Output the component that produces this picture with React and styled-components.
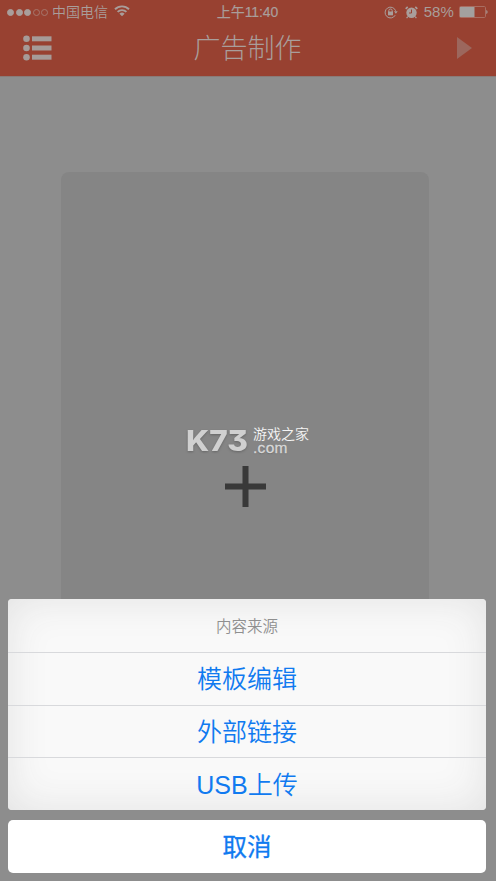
import styled, { createGlobalStyle } from "styled-components";

const options = ["模板编辑", "外部链接", "USB上传"];

export default function App() {
    return (
        <Screen>
            <GlobalStyle />
            <Header>
                <StatusBar>
                    <Carrier>
                        <Signal>
                            <Dot $on />
                            <Dot $on />
                            <Dot $on />
                            <Dot />
                            <Dot />
                        </Signal>
                        <span>中国电信</span>
                        <WifiIcon />
                    </Carrier>
                    <Time>上午11:40</Time>
                    <Indicators>
                        <LockIcon />
                        <AlarmIcon />
                        <Percent>58%</Percent>
                        <BatteryIcon />
                    </Indicators>
                </StatusBar>
                <NavBar>
                    <MenuIcon />
                    <Title>广告制作</Title>
                    <PlayIcon />
                </NavBar>
            </Header>

            <Content>
                <AdCard>
                    <PlusIcon />
                    <Watermark>
                        <WatermarkLogo />
                        <WatermarkText>
                            <WatermarkName>游戏之家</WatermarkName>
                            <WatermarkDomain>.com</WatermarkDomain>
                        </WatermarkText>
                    </Watermark>
                </AdCard>
            </Content>

            <ActionSheet>
                <Options>
                    <SheetLabel>内容来源</SheetLabel>
                    {options.map((option) => (
                        <Option key={option}>{option}</Option>
                    ))}
                </Options>
                <Cancel>取消</Cancel>
            </ActionSheet>
        </Screen>
    );
}

function WifiIcon() {
    return (
        <svg width="16" height="12" viewBox="0 0 16 12" fill="none" stroke="#a99e9b" strokeWidth="1.9">
            <path d="M1 4.2a10 10 0 0 1 14 0" />
            <path d="M3.6 6.9a6.3 6.3 0 0 1 8.8 0" />
            <path d="M8 11.2 5.4 8.8a3.8 3.8 0 0 1 5.2 0z" fill="#a99e9b" stroke="none" />
        </svg>
    );
}

function LockIcon() {
    return (
        <svg width="14" height="13" viewBox="0 0 14 13" fill="none" stroke="#a99e9b">
            <path d="M11.2 9.2A5.4 5.4 0 1 1 11.6 4.8" />
            <path d="M10 5.3h3.7l-1.8 2.5z" fill="#a99e9b" stroke="none" />
            <path d="M4.8 6V4.7a1.7 1.7 0 0 1 3.4 0V6" />
            <rect x="4" y="5.5" width="5" height="3.8" fill="#a99e9b" stroke="none" />
        </svg>
    );
}

function AlarmIcon() {
    return (
        <svg width="13" height="13" viewBox="0 0 13 13">
            <circle cx="6.5" cy="6.7" r="5.2" fill="#a99e9b" />
            <path d="M.7 2.9 2.7.9M12.3 2.9 10.3.9" stroke="#a99e9b" strokeWidth="1.6" />
            <path d="m2.8 10.6-1.2 1.6m8.6-1.6 1.2 1.6" stroke="#a99e9b" strokeWidth="1.2" />
            <path d="M6.5 3.5v3.5H4" fill="none" stroke="#984131" strokeWidth="1" />
        </svg>
    );
}

function BatteryIcon() {
    return (
        <svg width="29" height="12" viewBox="0 0 29 12">
            <rect x=".5" y=".5" width="26" height="11" rx="1.2" fill="none" stroke="#a96e62" />
            <rect x="1" y="1" width="14.5" height="10" fill="#a3a09e" />
            <path d="M27.3 4a2.2 2.2 0 0 1 0 4z" fill="#a99e9b" />
        </svg>
    );
}

function MenuIcon() {
    return (
        <svg width="29" height="26" viewBox="0 0 29 26" fill="#a69b98">
            <circle cx="3.5" cy="3.8" r="3.3" />
            <circle cx="3.5" cy="13" r="3.3" />
            <circle cx="3.5" cy="22.2" r="3.3" />
            <rect x="9" y="1.3" width="19.5" height="5" />
            <rect x="9" y="10.5" width="19.5" height="5" />
            <rect x="9" y="19.7" width="19.5" height="5" />
        </svg>
    );
}

function PlayIcon() {
    return (
        <svg width="15" height="22" viewBox="0 0 15 22">
            <path d="M0 0v22l15-11z" fill="#9c675d" />
        </svg>
    );
}

function PlusIcon() {
    return (
        <svg width="41" height="41" viewBox="0 0 41 41" stroke="#393939" strokeWidth="6">
            <path d="M20.5 0v41M0 20.5h41" />
        </svg>
    );
}

function WatermarkLogo() {
    return (
        <LogoSvg width="64" height="28" viewBox="0 0 64 28">
            <text x="1" y="25" textLength="62" lengthAdjust="spacingAndGlyphs">K73</text>
        </LogoSvg>
    );
}

const GlobalStyle = createGlobalStyle`
    * {
        box-sizing: border-box;
    }

    body {
        margin: 0;
        background-color: #8d8d8d;
        font-family: "Liberation Sans", "Noto Sans CJK SC", sans-serif;
    }
`

const Screen = styled.div`
    position: relative;
    width: 496px;
    height: 881px;
    overflow: hidden;
    background-color: #8d8d8d;
`

const Header = styled.header`
    height: 77px;
    background-color: #984131;
    border-bottom: 1px solid #8a7b78;
    color: #a99e9b;
`

const StatusBar = styled.div`
    display: grid;
    grid-template-columns: 1fr 70px 1fr;
    align-items: center;
    height: 24px;
    padding: 0 8px 0 7px;
    font-size: 14px;
    line-height: 24px;
`

const Carrier = styled.div`
    display: flex;
    align-items: center;
    font-weight: 350;

    svg {
        margin: 0 0 2px 6px;
    }
`

const Signal = styled.div`
    display: flex;
    gap: 1.5px;
    margin-right: 4px;
`

const Dot = styled.i`
    width: 7px;
    height: 7px;
    border-radius: 50%;
    border: 1px solid ${({ $on }) => ($on ? "#a99e9b" : "#a7776d")};
    background-color: ${({ $on }) => ($on ? "#a99e9b" : "transparent")};
`

const Time = styled.div`
    text-align: center;
    white-space: nowrap;
    letter-spacing: -0.1px;
    -webkit-text-stroke: 0.2px #a99e9b;
`

const Indicators = styled.div`
    display: flex;
    align-items: center;
    justify-content: flex-end;

    svg:nth-child(2) {
        margin-left: 7px;
    }
`

const Percent = styled.span`
    margin: 0 5px 0 6px;
    font-size: 15px;
    letter-spacing: 0.1px;
`

const NavBar = styled.nav`
    display: flex;
    align-items: center;
    justify-content: space-between;
    height: 52px;
    padding: 0 24px 4px 23px;
`

const Title = styled.h1`
    margin: 0 14px 0 0;
    padding-top: 2px;
    font-size: 27px;
    line-height: 44px;
    font-weight: 300;
`

const Content = styled.main`
    display: flex;
    justify-content: center;
    padding: 95px 6px 0 0;
`

const AdCard = styled.div`
    position: relative;
    display: flex;
    justify-content: center;
    width: 368px;
    height: 520px;
    padding-top: 294px;
    border-radius: 8px;
    background-color: #858585;
`

const Watermark = styled.div`
    position: absolute;
    top: 254px;
    left: 124px;
    display: flex;
    gap: 4px;
`

const LogoSvg = styled.svg`
    overflow: visible;
    filter: drop-shadow(0 1px 1px #666);

    text {
        font: 800 28.5px Inter, "Liberation Sans", sans-serif;
        font-feature-settings: "cv09";
        fill: #d0d0d0;
    }
`

const WatermarkText = styled.div`
    display: flex;
    flex-direction: column;
`

const WatermarkName = styled.span`
    font-size: 14px;
    line-height: 16px;
    font-weight: 350;
    color: #f4f4f4;
`

const WatermarkDomain = styled.span`
    font-size: 15.5px;
    line-height: 11px;
    letter-spacing: 0.3px;
    color: #d8d8d8;
    -webkit-text-stroke: 0.3px #d8d8d8;
    text-shadow: 0 1px 1px #6e6e6e;
`

const ActionSheet = styled.section`
    position: absolute;
    left: 8px;
    bottom: 8px;
    display: flex;
    flex-direction: column;
    gap: 10px;
    width: 478px;
    text-align: center;
`

const Options = styled.div`
    border-radius: 4px;
    background-color: #f9f9f9;
    box-shadow: inset 0 0 42px #e2e2e2;
`

const SheetLabel = styled.p`
    height: 53px;
    margin: 0;
    padding-top: 1px;
    font-size: 15.5px;
    line-height: 53px;
    font-weight: 350;
    color: #8f8f8f;
`

const Option = styled.button`
    display: block;
    width: 100%;
    height: 52.7px;
    padding: 2px 0 0;
    border: none;
    border-top: 1px solid #d8d9dc;
    background: transparent;
    font: 350 25px/49px "Liberation Sans", "Noto Sans CJK SC", sans-serif;
    color: #107af0;
`

const Cancel = styled.button`
    height: 53px;
    padding: 2px 0 0;
    border: none;
    border-radius: 5px;
    background-color: #fff;
    font: 400 24.5px/51px "Liberation Sans", "Noto Sans CJK SC", sans-serif;
    color: #107af0;
    -webkit-text-stroke: 0.3px #107af0;
`
